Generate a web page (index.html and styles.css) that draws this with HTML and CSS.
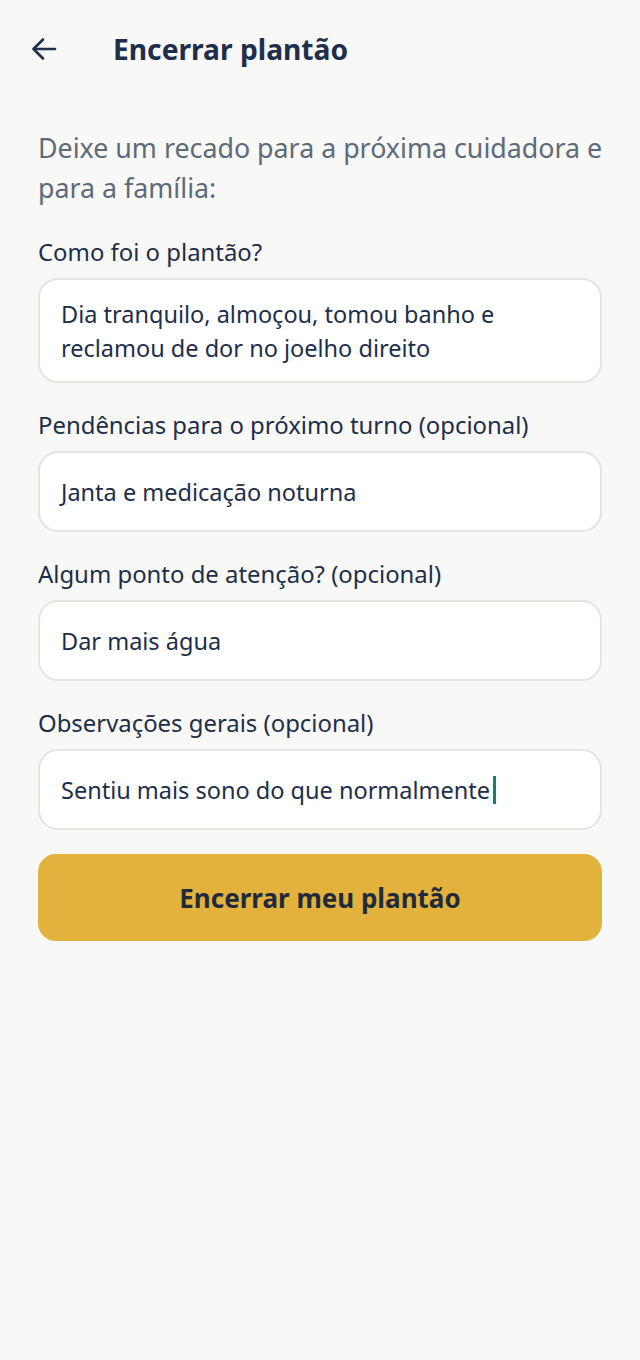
FILE: index.html
```html
<!DOCTYPE html>
<html lang="pt-BR">
<head>
<meta charset="utf-8">
<title>Encerrar plantão</title>
<link rel="stylesheet" href="styles.css">
</head>
<body>
<div class="screen">
  <header class="topbar">
    <button class="back" aria-label="Voltar">
      <svg width="26" height="24" viewBox="0 0 26 24" fill="none" stroke="#1e2f4d" stroke-width="2.6" stroke-linecap="round" stroke-linejoin="round">
        <path d="M24 12H3"/>
        <path d="M12 2.5L2.5 12L12 21.5"/>
      </svg>
    </button>
    <h1 class="title">Encerrar plantão</h1>
  </header>

  <main class="content">
    <p class="intro">Deixe um recado para a próxima cuidadora e para a família:</p>

    <div class="field">
      <label class="label">Como foi o plantão?</label>
      <div class="input multi">Dia tranquilo, almoçou, tomou banho e<br>reclamou de dor no joelho direito</div>
    </div>

    <div class="field">
      <label class="label">Pendências para o próximo turno (opcional)</label>
      <div class="input">Janta e medicação noturna</div>
    </div>

    <div class="field">
      <label class="label">Algum ponto de atenção? (opcional)</label>
      <div class="input">Dar mais água</div>
    </div>

    <div class="field">
      <label class="label">Observações gerais (opcional)</label>
      <div class="input">Sentiu mais sono do que normalmente<span class="caret"></span></div>
    </div>

    <button class="primary">Encerrar meu plantão</button>
  </main>
</div>
</body>
</html>
```

FILE: styles.css
```css
html, body {
  margin: 0;
  padding: 0;
  background: #f8f8f6;
}
body {
  font-family: "Noto Sans", "Open Sans", sans-serif;
  color: #1d2e4b;
}
.screen {
  width: 640px;
  min-height: 1360px;
  background: #f8f8f6;
}
.topbar {
  display: flex;
  align-items: center;
  height: 97px;
  padding-left: 31px;
  box-sizing: border-box;
}
.back {
  background: none;
  border: 0;
  padding: 0;
  width: 26px;
  height: 24px;
  display: flex;
  margin-right: 56px;
  cursor: pointer;
}
.title {
  margin: 0;
  font-size: 28.2px;
  font-weight: 700;
  color: #1e2f4d;
}
.content {
  padding: 31px 38px 0 38px;
  display: flex;
  flex-direction: column;
}
.intro {
  margin: 0 -8px 29px 0;
  font-size: 26.8px;
  line-height: 40px;
  color: #5d6a79;
}
.field {
  display: flex;
  flex-direction: column;
  gap: 11px;
  margin-bottom: 27px;
}
.label {
  font-size: 23.9px;
  line-height: 30px;
  color: #1d2e4b;
}
.input {
  background: #ffffff;
  border: 2px solid #e4e4e0;
  border-radius: 20px;
  box-sizing: border-box;
  min-height: 81px;
  padding: 0 21px;
  display: flex;
  align-items: center;
  font-size: 23.5px;
  line-height: 34px;
  color: #1d2e4b;
}
.input.multi {
  display: block;
  min-height: 104px;
  padding-top: 17px;
  padding-bottom: 16px;
}
.caret {
  display: inline-block;
  width: 3px;
  height: 28px;
  background: #12806e;
  margin-left: 3px;
}
.primary {
  margin-top: -3px;
  height: 87px;
  border: 0;
  border-radius: 18px;
  background: #e3b23c;
  font-family: inherit;
  font-size: 26px;
  font-weight: 700;
  color: #1f2b3b;
  cursor: pointer;
}
```
